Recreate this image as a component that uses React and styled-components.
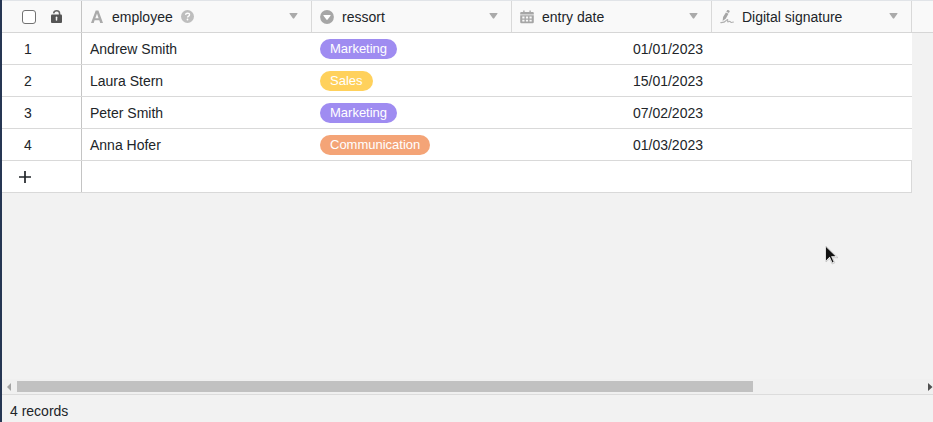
import React from "react";
import styled, { createGlobalStyle } from "styled-components";

const GlobalStyle = createGlobalStyle`
  * { box-sizing: border-box; }
  body { margin: 0; overflow: hidden; background: #f2f2f2; }
`;

const Page = styled.main`
  position: relative;
  display: flex;
  flex-direction: column;
  width: 933px;
  height: 422px;
  border-left: 2px solid #263653;
  background: #f2f2f2;
  color: #212529;
  font: 14px/20px "Liberation Sans", Arial, sans-serif;
  overflow: hidden;
`;

const HeaderRow = styled.div`
  display: grid;
  grid-template-columns: 80px 230px 200px 200px 200px 1fr;
  height: 33px;
  background: #f9f9f9;
  border-top: 1px solid #e1e4e8;
  border-bottom: 1px solid #d6d6d6;
`;

const HeaderCell = styled.div`
  display: flex;
  align-items: center;
  padding: 0 13px 0 8px;
  border-right: 1px solid ${(p) => (p.$frozen ? "#c4c4c4" : "#d9d9d9")};
  white-space: nowrap;
`;

const SelectCell = styled(HeaderCell)`
  padding: 0 0 0 20px;
  gap: 15px;
`;

const Title = styled.span`
  margin-left: 8px;
`;

const Checkbox = styled.span`
  width: 14px;
  height: 14px;
  border: 1px solid #727272;
  border-radius: 3px;
  background: #fff;
`;

const Icon = styled.svg`
  display: block;
  flex: none;
  overflow: visible;
`;

const HelpIcon = styled(Icon)`
  margin-left: 8px;
`;

const CaretIcon = styled(Icon)`
  margin: 0 0 1px auto;
`;

const Row = styled.div`
  display: grid;
  grid-template-columns: 80px 230px 200px 200px 200px;
  width: 910px;
  height: 32px;
  background: #fff;
  border-bottom: 1px solid #d9d9d9;
`;

const AddRow = styled(Row)`
  border-right: 1px solid #d9d9d9;
`;

const Cell = styled.div`
  display: flex;
  align-items: center;
  padding: 1px 9px 0 8px;
  justify-content: ${(p) => (p.$end ? "flex-end" : "flex-start")};
`;

const IndexCell = styled(Cell)`
  padding: 1px 0 0 22px;
  border-right: 1px solid #c4c4c4;
`;

const AddCell = styled(IndexCell)`
  padding: 1px 0 0 17px;
`;

const Tag = styled.span`
  height: 20px;
  padding: 0 10px;
  border-radius: 10px;
  background: ${(p) => p.$color};
  color: #fff;
  font-size: 13px;
  line-height: 20px;
`;

const Blank = styled.div`
  flex: 1;
`;

const Scrollbar = styled.div`
  display: flex;
  align-items: center;
  height: 15px;
  padding-left: 5px;
  background: #f0f0f0;
`;

const Thumb = styled.div`
  width: 736px;
  height: 11px;
  margin: 0 auto 0 6px;
  background: #c1c1c1;
`;

const Footer = styled.footer`
  height: 28px;
  padding: 6px 8px 0;
  border-top: 1px solid #dcdcdc;
`;

const Pointer = styled.svg`
  position: absolute;
  left: 823px;
  top: 245px;
`;

const TextIcon = () => (
  <Icon width="14" height="14" viewBox="0 0 14 14">
    <path d="M5.7.6h2.7L13 13h-2.8l-.9-2.7H4.6L3.7 13H1ZM7 3.5 5.3 8.2h3.3Z" fill="#aaa" fillRule="evenodd" />
  </Icon>
);

const SelectIcon = () => (
  <Icon width="14" height="14" viewBox="0 0 14 14">
    <circle cx="7" cy="7" r="6.9" fill="#a6a6a6" />
    <path d="M3.8 5h6.4q.8 0 .3.7L7.6 9.6q-.6.7-1.2 0L3.5 5.7Q3 5 3.8 5Z" fill="#fff" />
  </Icon>
);

const CalendarIcon = () => (
  <Icon width="14" height="14" viewBox="0 0 14 14">
    <path d="M1.2 2h2V.4h1.4V2h4.8V.4h1.4V2h2q1 0 1 1v1.4H.2V3q0-1 1-1ZM.2 5.2h13.6v6.8q0 1.2-1.2 1.2H1.4Q.2 13.2.2 12Z" fill="#a6a6a6" />
    <path d="M2.3 6.6h2.2v1.9H2.3zM5.9 6.6h2.2v1.9H5.9zM9.5 6.6h2.2v1.9H9.5zM2.3 9.7h2.2v1.9H2.3zM5.9 9.7h2.2v1.9H5.9zM9.5 9.7h2.2v1.9H9.5z" fill="#f9f9f9" />
  </Icon>
);

const SignatureIcon = () => (
  <Icon width="14" height="14" viewBox="0 0 14 14">
    <path d="M7.3.1q1.8-.2 2.5 1.1L8.9 3 6.3 1.8ZM5.9 2.6l2.6 1.2-2.8 4.9-3.1 2.2.5-3.8Z" fill="#a6a6a6" />
    <path d="M.8 12.6q3.6.1 5.6-2.3 1.7-1.7 1.3.1-.5 2.1 1.2 1.2 1-.5 1.5.3.6 1 3 .2" fill="none" stroke="#b0b0b0" strokeWidth="1.1" strokeLinecap="round" />
  </Icon>
);

const LockIcon = () => (
  <Icon width="13" height="14" viewBox="0 0 13 14">
    <path d="M2.6 3.4Q3 .8 5.7.8 8.6.8 8.6 3.8V5" fill="none" stroke="#666" strokeWidth="1.5" />
    <rect x="0" y="4.5" width="11" height="8.5" rx="1" fill="#555" />
    <path d="M5.5 7.3v2.7" stroke="#f5f5f5" strokeWidth="1.5" strokeLinecap="round" />
  </Icon>
);

const Help = () => (
  <HelpIcon width="13" height="13" viewBox="0 0 13 13">
    <circle cx="6.5" cy="6.5" r="6.5" fill="#bebebe" />
    <path d="M4.6 4.9q.1-1.8 2-1.8 2 .1 1.9 1.7 0 .8-1.2 1.5-.7.4-.7 1.2" fill="none" stroke="#fff" strokeWidth="1.4" />
    <circle cx="6.5" cy="9.5" r=".9" fill="#fff" />
  </HelpIcon>
);

const Caret = () => (
  <CaretIcon width="9" height="6" viewBox="0 0 9 6">
    <path d="M1 0h7q1 0 .4.8L5.2 5.2q-.7.9-1.4 0L.6.8Q0 0 1 0Z" fill="#aaa" />
  </CaretIcon>
);

const columns = [
  { title: "employee", Glyph: TextIcon, help: true },
  { title: "ressort", Glyph: SelectIcon },
  { title: "entry date", Glyph: CalendarIcon },
  { title: "Digital signature", Glyph: SignatureIcon },
];

const tagColors = { Marketing: "#9f8cf1", Sales: "#ffd15c", Communication: "#f4a477" };

const records = [
  ["Andrew Smith", "Marketing", "01/01/2023"],
  ["Laura Stern", "Sales", "15/01/2023"],
  ["Peter Smith", "Marketing", "07/02/2023"],
  ["Anna Hofer", "Communication", "01/03/2023"],
];

export default function App() {
  return (
    <>
      <GlobalStyle />
      <Page>
        <HeaderRow>
          <SelectCell $frozen>
            <Checkbox />
            <LockIcon />
          </SelectCell>
          {columns.map(({ title, Glyph, help }) => (
            <HeaderCell key={title}>
              <Glyph />
              <Title>{title}</Title>
              {help && <Help />}
              <Caret />
            </HeaderCell>
          ))}
        </HeaderRow>
        {records.map(([name, department, date], i) => (
          <Row key={name}>
            <IndexCell>{i + 1}</IndexCell>
            <Cell>{name}</Cell>
            <Cell><Tag $color={tagColors[department]}>{department}</Tag></Cell>
            <Cell $end>{date}</Cell>
            <Cell />
          </Row>
        ))}
        <AddRow>
          <AddCell>
            <Icon width="12" height="12" viewBox="0 0 12 12">
              <path d="M6 0v12M0 6h12" stroke="#212529" strokeWidth="1.7" />
            </Icon>
          </AddCell>
        </AddRow>
        <Blank />
        <Scrollbar>
          <Icon width="4" height="8" viewBox="0 0 4 8"><path d="M4 0v8L0 4Z" fill="#a3a3a3" /></Icon>
          <Thumb />
          <Icon width="5" height="8" viewBox="0 0 5 8"><path d="M0 0v8l4.5-4Z" fill="#505050" /></Icon>
        </Scrollbar>
        <Footer>4 records</Footer>
        <Pointer width="15" height="21" viewBox="0 0 15 21">
          <path d="M1 1v16l3.7-3.4 2.4 5.4 2.7-1.2-2.4-5.1H13Z" fill="#fff" stroke="#bbb" strokeWidth=".7" />
          <path d="M1 2v13.4l3.8-3.6 2.6 5.7 1.2-.6-2.5-5.7h4.4Z" fill="#111" />
        </Pointer>
      </Page>
    </>
  );
}
